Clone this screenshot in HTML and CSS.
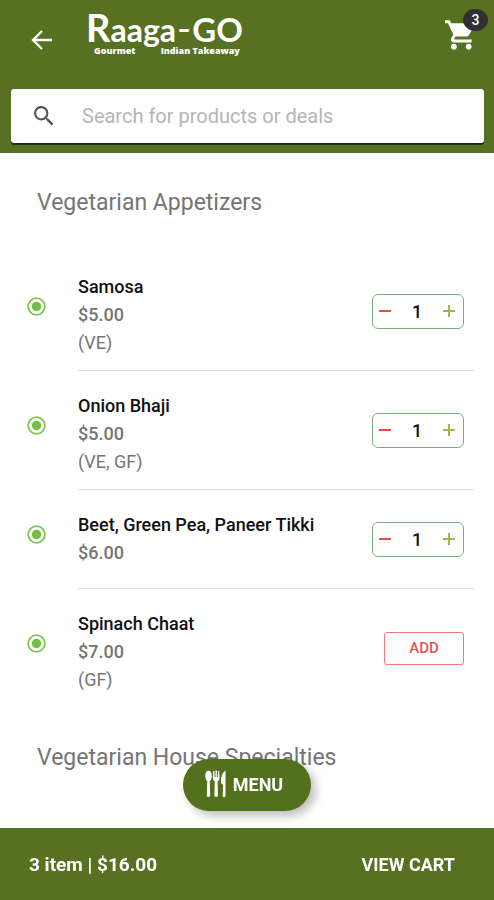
FILE: index.html
```html
<!DOCTYPE html>
<html lang="en">
<head>
<meta charset="utf-8">
<meta name="viewport" content="width=device-width, initial-scale=1">
<title>Raaga-GO</title>
<link rel="stylesheet" href="styles.css">
</head>
<body>
<svg class="defs" aria-hidden="true">
  <symbol id="veg" viewBox="0 0 20 20">
    <circle cx="10" cy="10" r="8.8" fill="none" stroke="#7cc653" stroke-width="1.9"/>
    <circle cx="10" cy="10" r="5" fill="#72bf44"/>
  </symbol>
  <symbol id="minus" viewBox="0 0 12 12"><path d="M0 6h12" stroke="#ef4b45" stroke-width="2"/></symbol>
  <symbol id="plus" viewBox="0 0 12 12"><path d="M0 6h12M6 0v12" stroke="#9abb4c" stroke-width="2"/></symbol>
</svg>
<header class="header">
  <div class="bar">
    <button class="icon-button" type="button" aria-label="Back">
      <svg class="back-icon" viewBox="0 0 22 22"><path d="M21 11H2M11 2L2 11l9 9" fill="none" stroke="#fff" stroke-width="2.3"/></svg>
    </button>
    <div class="logo">
      <div class="brand"><span class="brand-initial">R</span><span>aaga</span><span class="brand-dash">-</span><span class="brand-go">GO</span></div>
      <div class="tagline"><span>Gourmet</span><span>Indian Takeaway</span></div>
    </div>
    <button class="icon-button cart" type="button" aria-label="Cart, 3 items">
      <svg class="cart-icon" viewBox="1 2 21 20"><path fill="#fff" d="M7 18c-1.100 0-1.990.9-1.990 2S5.900 22 7 22s2-.9 2-2-.9-2-2-2zM1 2v2h2l3.600 7.590-1.350 2.450c-.16.28-.25.61-.25.96 0 1.100.9 2 2 2h12v-2H7.420c-.14 0-.25-.11-.25-.25l.03-.12.9-1.630h7.450c.75 0 1.410-.41 1.750-1.030l3.580-6.490A1 1 0 0 0 20 4H5.210l-.94-2H1zm16 16c-1.100 0-1.990.9-1.990 2s.89 2 1.990 2 2-.9 2-2-.9-2-2-2z"/></svg>
      <span class="badge">3</span>
    </button>
  </div>
  <label class="search">
    <svg class="search-icon" viewBox="3 3 18 18"><path fill="#555" d="M15.500 14h-.79l-.28-.27A6.470 6.470 0 0 0 16 9.500 6.500 6.500 0 1 0 9.500 16c1.610 0 3.090-.59 4.230-1.570l.27.28v.79l5 4.990L20.490 19l-4.990-5zm-6 0C7.010 14 5 11.990 5 9.500S7.010 5 9.500 5 14 7.010 14 9.500 11.990 14 9.500 14z"/></svg>
    <input type="search" placeholder="Search for products or deals" aria-label="Search for products or deals">
  </label>
</header>
<main class="content">
  <h2 class="section-title">Vegetarian Appetizers</h2>
  <ul class="items">
    <li class="item">
      <svg class="veg" role="img" aria-label="Vegetarian"><use href="#veg"/></svg>
      <div class="row">
        <div class="details"><h3>Samosa</h3><p class="price">$5.00</p><p>(VE)</p></div>
        <div class="stepper">
          <button type="button" aria-label="Remove one Samosa"><svg><use href="#minus"/></svg></button>
          <span>1</span>
          <button type="button" aria-label="Add one Samosa"><svg><use href="#plus"/></svg></button>
        </div>
      </div>
    </li>
    <li class="item">
      <svg class="veg" role="img" aria-label="Vegetarian"><use href="#veg"/></svg>
      <div class="row">
        <div class="details"><h3>Onion Bhaji</h3><p class="price">$5.00</p><p>(VE, GF)</p></div>
        <div class="stepper">
          <button type="button" aria-label="Remove one Onion Bhaji"><svg><use href="#minus"/></svg></button>
          <span>1</span>
          <button type="button" aria-label="Add one Onion Bhaji"><svg><use href="#plus"/></svg></button>
        </div>
      </div>
    </li>
    <li class="item">
      <svg class="veg" role="img" aria-label="Vegetarian"><use href="#veg"/></svg>
      <div class="row">
        <div class="details"><h3>Beet, Green Pea, Paneer Tikki</h3><p class="price">$6.00</p></div>
        <div class="stepper">
          <button type="button" aria-label="Remove one Tikki"><svg><use href="#minus"/></svg></button>
          <span>1</span>
          <button type="button" aria-label="Add one Tikki"><svg><use href="#plus"/></svg></button>
        </div>
      </div>
    </li>
    <li class="item">
      <svg class="veg" role="img" aria-label="Vegetarian"><use href="#veg"/></svg>
      <div class="row">
        <div class="details"><h3>Spinach Chaat</h3><p class="price">$7.00</p><p>(GF)</p></div>
        <button class="add" type="button">ADD</button>
      </div>
    </li>
  </ul>
  <h2 class="section-title">Vegetarian House Specialties</h2>
</main>
<div class="bottom">
  <button class="menu" type="button">
    <svg class="menu-icon" viewBox="0 0 22 28" fill="#fff">
      <ellipse cx="3.500" cy="6" rx="3.300" ry="5.600"/><path d="M2.300 10h2.400l.5 16q-1.700 2-3.400 0z"/>
      <path d="M8.300 1h1.200v6h1V.5h1.400V7h1V1h1.200l.5 6q0 3.500-2 4.500l.4 14.500q-1.800 2-3.600 0l.4-14.500q-2-1-2-4.500z"/>
      <path d="M20.500.5v26q-1.500 1.500-2.800 0l.4-11.500-2.100-2q-.5-9 4.500-12.500z"/>
    </svg>
    MENU
  </button>
  <footer class="cart-bar">
    <span class="total">3 item | $16.00</span>
    <a href="#cart">VIEW CART</a>
  </footer>
</div>
</body>
</html>
```
FILE: styles.css
```css
* {
  box-sizing: border-box;
}

body {
  margin: 0;
  min-height: 100vh;
  background: #fff;
  color: #757575;
  font-family: Roboto, "Liberation Sans", sans-serif;
  font-size: 18px;
}

h2, h3, p, ul {
  margin: 0;
  padding: 0;
  font-weight: 400;
}

button {
  margin: 0;
  padding: 0;
  border: 0;
  background: none;
  font: inherit;
  cursor: pointer;
}

svg {
  display: block;
}

.defs {
  position: absolute;
  width: 0;
  height: 0;
}

.header {
  padding: 8px 10px 10px 11px;
  background: #567122;
}

.bar {
  display: flex;
  align-items: flex-start;
  height: 81px;
}

.icon-button {
  position: relative;
  display: flex;
}

.back-icon {
  width: 22px;
  height: 22px;
  margin: 21px 0 0 20px;
}

.logo {
  margin-left: 33px;
  color: #fff;
  font-family: Lato, sans-serif;
  font-weight: 700;
}

.brand {
  display: flex;
  align-items: baseline;
  height: 38px;
  font-size: 32px;
  line-height: 38px;
}

.brand-initial {
  font-size: 38px;
}

.brand-dash {
  padding: 0 1px;
  font-size: 38px;
  font-weight: 400;
}

.brand-go {
  font-size: 33px;
}

.tagline {
  display: flex;
  justify-content: space-between;
  padding: 0 3px 0 8px;
  font-family: "Open Sans", sans-serif;
  font-size: 9px;
  font-weight: 800;
  line-height: 10px;
}

.cart {
  margin-left: auto;
  padding: 11px 8px 0 0;
}

.cart-icon {
  width: 31px;
  height: 32px;
}

.badge {
  position: absolute;
  top: 1px;
  right: -4px;
  width: 25px;
  height: 22px;
  border-radius: 50%;
  background: #303034;
  color: #fff;
  font-size: 14px;
  font-weight: 500;
  line-height: 22px;
  text-align: center;
}

.search {
  display: flex;
  align-items: center;
  gap: 28px;
  height: 54px;
  padding: 0 23px;
  border-radius: 3px;
  background: #fff;
  box-shadow: 0 2px 0 #19300a;
}

.search-icon {
  flex: none;
  width: 20px;
  height: 20px;
}

.search input {
  flex: 1;
  min-width: 0;
  padding: 0;
  border: 0;
  outline: 0;
  background: none;
  color: #333;
  font: inherit;
  font-size: 20px;
}

.search input::placeholder {
  color: #b5b5b5;
}

.content {
  padding-bottom: 93px;
}

.section-title {
  padding: 0 37px;
  font-size: 23px;
  line-height: 99px;
}

.items {
  list-style: none;
}

.item {
  display: flex;
  align-items: center;
  gap: 32px;
  padding: 0 20px 0 27px;
}

.veg {
  flex: none;
  width: 19px;
  height: 19px;
  margin-bottom: 10px;
}

.row {
  display: flex;
  flex: 1;
  align-items: center;
  justify-content: space-between;
  min-height: 99px;
  padding-right: 10px;
  border-bottom: 1px solid #dcdcdc;
}

.item:last-child .row {
  border-color: transparent;
}

.details {
  align-self: flex-start;
  padding: 21px 0 13px;
  line-height: 28px;
}

.details h3 {
  color: #111;
  font-size: 18px;
  font-weight: 500;
}

.price {
  font-weight: 500;
}

.stepper {
  display: flex;
  align-items: center;
  justify-content: space-between;
  width: 92px;
  height: 35px;
  padding: 0 8px 0 6px;
  border: 1px solid #76b37a;
  border-radius: 6px;
  color: #111;
  font-weight: 500;
}

.stepper svg {
  width: 12px;
  height: 12px;
}

.add {
  width: 80px;
  height: 33px;
  border: 1px solid #ee7b7b;
  border-radius: 3px;
  color: #e35353;
  font-size: 15px;
  font-weight: 500;
}

.bottom {
  position: fixed;
  right: 0;
  bottom: 0;
  left: 0;
  display: flex;
  flex-direction: column;
  align-items: center;
  gap: 17px;
}

.menu {
  display: flex;
  align-items: center;
  justify-content: center;
  gap: 6px;
  width: 128px;
  height: 52px;
  padding: 0 6px 2px 0;
  border-radius: 26px;
  background: #53701c;
  box-shadow: 5px 5px 10px rgba(0, 0, 0, 0.25);
  color: #fff;
  font-size: 18px;
  font-weight: 700;
}

.menu-icon {
  width: 22px;
  height: 28px;
}

.cart-bar {
  display: flex;
  align-items: center;
  justify-content: space-between;
  align-self: stretch;
  height: 72px;
  padding: 0 39px 0 29px;
  background: #567122;
  color: #fff;
  font-size: 18px;
  font-weight: 700;
}

.total {
  font-size: 19px;
}

.cart-bar a {
  color: inherit;
  text-decoration: none;
}
```
